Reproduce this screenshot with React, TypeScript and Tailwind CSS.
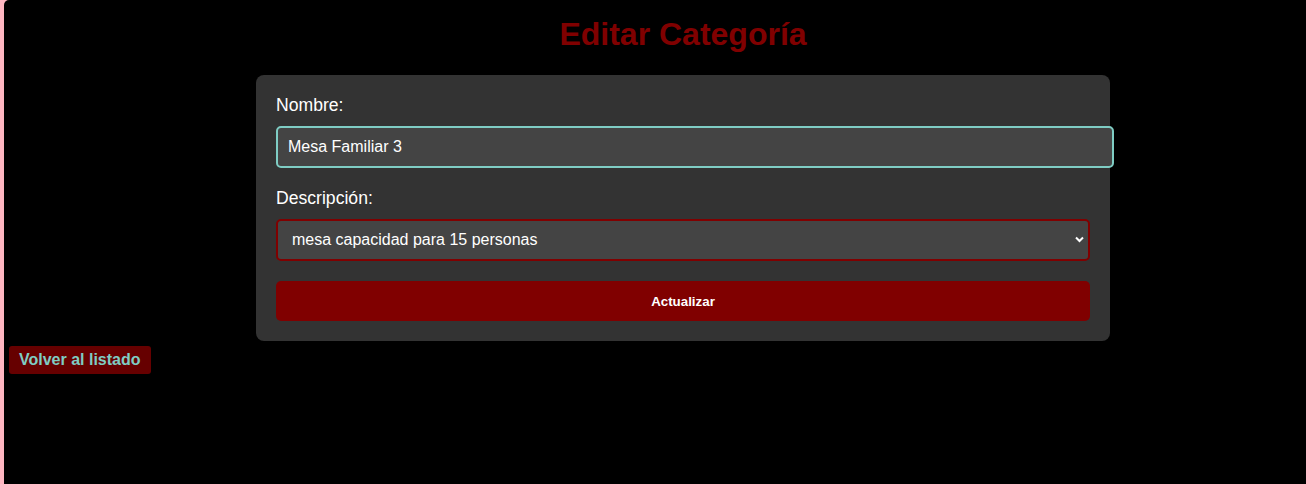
const App = () => {
  return (
    <div className="min-h-screen bg-[#ffb6c1] pl-[4px] flex" style={{ fontFamily: '"Liberation Sans", Arial, sans-serif' }}>
      <div className="flex-1 bg-black rounded-tl-[5px] min-h-screen">
        <div className="w-[854px] ml-[252px] pt-[16px]">
          <h1 className="text-center text-[32px] leading-[37px] font-bold text-[#800000] mb-[22px]">
            Editar Categoría
          </h1>

          <form className="bg-[#333333] rounded-lg p-[20px]" onSubmit={(e) => e.preventDefault()}>
            <label className="block text-white text-[17.6px] leading-[18px] pt-[1px] mb-[12px]">Nombre:</label>
            <input
              type="text"
              defaultValue="Mesa Familiar 3"
              className="block w-[838px] h-[42px] px-[10px] bg-[#444444] text-white text-base border-2 border-[#7fcdc4] rounded-[5px] outline-none mb-[20px]"
            />

            <label className="block text-white text-[17.6px] leading-[18px] pt-[1px] mb-[12px]">Descripción:</label>
            <div className="relative mb-[20px]">
              <select
                defaultValue="15"
                className="block w-full h-[42px] pl-[14px] pr-[30px] bg-[#444444] text-white text-base border-2 border-[#800000] rounded-[5px] appearance-none outline-none"
              >
                <option value="15">mesa capacidad para 15 personas</option>
              </select>
              <svg
                className="absolute right-[6px] top-[17px] pointer-events-none"
                width="9"
                height="7"
                viewBox="0 0 9 7"
                fill="none"
              >
                <path d="M1 1.5 L4.5 5 L8 1.5" stroke="white" strokeWidth="2" />
              </svg>
            </div>

            <button
              type="submit"
              className="block w-full h-[40px] pt-[2px] bg-[#800000] text-white text-[13.33px] font-bold rounded-[5px]"
            >
              Actualizar
            </button>
          </form>
        </div>

        <a
          href="#"
          className="inline-block mt-[5px] ml-[5px] px-[10px] py-[5px] leading-[18px] bg-[#660000] text-[#7fcdc4] font-bold text-base rounded-[3px]"
        >
          Volver al listado
        </a>
      </div>
    </div>
  );
};

export default App;
